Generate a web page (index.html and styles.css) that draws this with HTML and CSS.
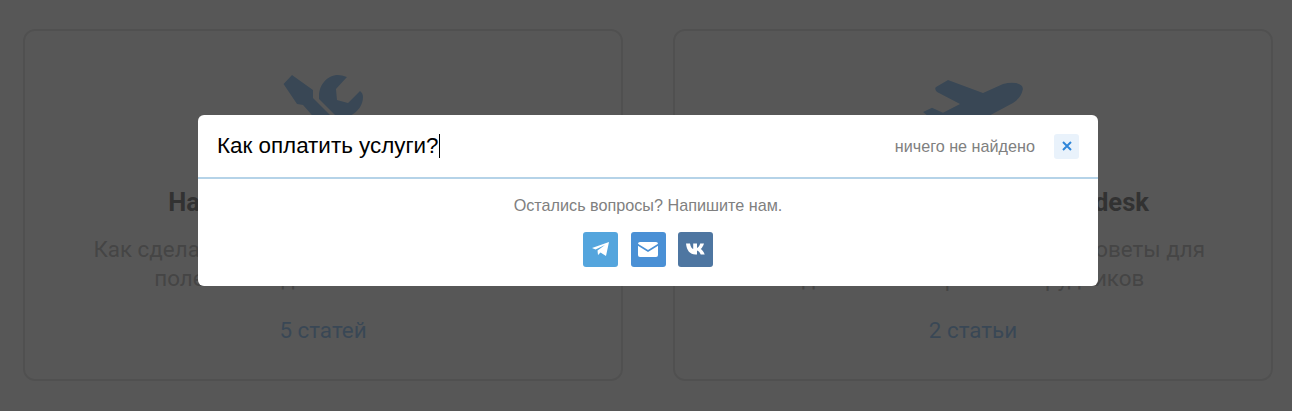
FILE: index.html
```html
<!DOCTYPE html>
<html lang="ru">
<head>
    <meta charset="UTF-8">
    <meta name="viewport" content="width=device-width, initial-scale=1.0">
    <title>Помощь</title>
    <link rel="stylesheet" href="styles.css">
</head>
<body>
    <div class="cards">
        <a class="card" href="#">
            <svg class="card-icon" viewBox="283 75 80 80">
                <path d="M283.5 84 L292 75 L313 90 L313 98 L330 115 L318 122 L303 105 L297 104 Z"/>
                <path d="M347 77 Q342 75 338 75 C327 75 319 85 319 96 L319 99 L338 118 L350 116 C358 112 363 105 363 97 Q363 93 360 91 L348 103 L337 100 L336 89 Z"/>
            </svg>
            <h3 class="card-title">Настройка и оформление</h3>
            <p class="card-text">Как сделать первый шаг в настройке сайта<br>полезными данными с сайтами</p>
            <span class="card-link">5 статей</span>
        </a>
        <a class="card" href="#">
            <svg class="card-icon" viewBox="923 75 100 80">
                <path d="M923 112 L932 107.7 L943 112.7 L960 104 L937 92 Q934 89 936 87 L948 80 L983 93 L1003 84 Q1010 82 1016 83 Q1024 85 1022.7 90 Q1021 98 1013 103 L985 118 L950 130 L935 122 Z"/>
            </svg>
            <h3 class="card-title">Поддержка сайта в Helpdesk</h3>
            <p class="card-text">Как работать в Helpdesk: умные советы для<br>для поиска и роста сотрудников</p>
            <span class="card-link">2 статьи</span>
        </a>
    </div>

    <div class="overlay">
        <div class="search-modal">
            <div class="search-head">
                <div class="search-input">Как оплатить услуги?<span class="caret"></span></div>
                <span class="search-status">ничего не найдено</span>
                <button class="search-close" type="button">
                    <svg viewBox="0 0 10 10"><path d="M1 1 L9 9 M9 1 L1 9"/></svg>
                </button>
            </div>
            <div class="search-body">
                <p class="search-hint">Остались вопросы? Напишите нам.</p>
                <div class="contacts">
                    <a class="contact contact-tg" href="#">
                        <svg viewBox="0 0 35 35"><path d="M9 16 L26 10 L23 24 L17.5 20.5 L15 23 L14.5 18.5 L22 13 L12.5 17.5 Z"/></svg>
                    </a>
                    <a class="contact contact-mail" href="#">
                        <svg viewBox="0 0 35 35">
                            <rect x="7" y="10" width="20" height="15" rx="2"/>
                            <path class="mail-fold" d="M6.5 12.5 L17 19 L27.5 12.5"/>
                        </svg>
                    </a>
                    <a class="contact contact-vk" href="#">
                        <svg viewBox="0 0 35 35"><path d="M8 11.5 h4 c.6 3 2 5.5 3.2 5.5 V11.5 h3.8 v4.5 c1.2 0 2.5-2.2 3.2-4.5 h3.8 c-.6 2.5-2.2 4.6-3.3 5.6 1.4.8 3 2.6 4 5.4 h-4 c-.8-2.2-2.3-3.7-3.7-3.9 v3.9 h-1.6 C12 22.5 8.7 18.5 8 11.5z"/></svg>
                    </a>
                </div>
            </div>
        </div>
    </div>
</body>
</html>
```

FILE: styles.css
```css
html, body {
    height: 100%;
}
body {
    margin: 0;
    background: #fff;
    font-family: 'Roboto', sans-serif;
    overflow: hidden;
}
.cards {
    display: grid;
    grid-template-columns: 600px 600px;
    column-gap: 50px;
    padding: 29px 19px 0 23px;
}
.card {
    display: block;
    box-sizing: border-box;
    height: 352px;
    padding-top: 44px;
    border: 2px solid #d8d8d8;
    border-radius: 12px;
    text-align: center;
    text-decoration: none;
}
.card-icon {
    display: block;
    height: 80px;
    margin: 0 auto;
    fill: #5ba8f0;
}
.card-title {
    margin: 32px 0 0;
    font-size: 25.6px;
    line-height: 30px;
    font-weight: 700;
    color: #333;
}
.card-text {
    margin: 18px 0 0;
    font-size: 22.4px;
    line-height: 29px;
    color: #999;
}
.card-link {
    display: block;
    margin-top: 22px;
    font-size: 22.4px;
    line-height: 30px;
    color: #5ba8f0;
}
.overlay {
    position: fixed;
    top: 0;
    right: 0;
    bottom: 0;
    left: 0;
    background: rgba(50, 50, 50, 0.82);
}
.search-modal {
    width: 900px;
    margin: 115px 0 0 198px;
    background: #fff;
    border-radius: 6px;
    font-family: 'Liberation Sans', Arial, sans-serif;
}
.search-head {
    display: flex;
    align-items: center;
    height: 62px;
    padding: 0 19px;
    border-bottom: 2px solid #b5d3e8;
}
.search-input {
    flex: 1;
    display: flex;
    align-items: center;
    font-size: 22.4px;
    color: #000;
}
.caret {
    width: 1px;
    height: 24px;
    background: #000;
}
.search-status {
    margin-right: 19px;
    font-size: 16.2px;
    color: #808080;
}
.search-close {
    display: flex;
    align-items: center;
    justify-content: center;
    width: 25px;
    height: 25px;
    padding: 0;
    border: none;
    border-radius: 3px;
    background: #e9f2fb;
}
.search-close svg {
    width: 10px;
    height: 10px;
    fill: none;
    stroke: #2f86d9;
    stroke-width: 2;
}
.search-body {
    height: 107px;
    text-align: center;
}
.search-hint {
    margin: 0;
    padding-top: 17px;
    font-size: 16.2px;
    line-height: 18px;
    color: #808080;
}
.contacts {
    display: flex;
    justify-content: center;
    gap: 12.5px;
    margin-top: 18px;
}
.contact {
    display: block;
    width: 35px;
    height: 35px;
    border-radius: 3px;
}
.contact svg {
    display: block;
    width: 35px;
    height: 35px;
    fill: #fff;
}
.contact-tg {
    background: #54a5dd;
}
.contact-mail {
    background: #4a90d5;
}
.contact-vk {
    background: #4e76a1;
}
.mail-fold {
    fill: none;
    stroke: #4a90d5;
    stroke-width: 1.6;
}
```
